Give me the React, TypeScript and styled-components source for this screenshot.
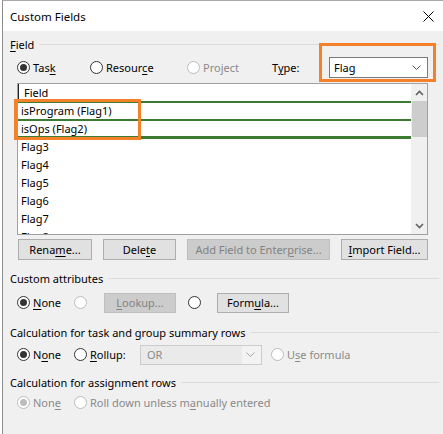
import React from "react";
import styled, { createGlobalStyle } from "styled-components";

const GlobalStyle = createGlobalStyle`
  html, body { margin: 0; padding: 0; background: #ffffff; }
  body {
    font-family: "Noto Sans", "Segoe UI", sans-serif;
    font-size: 11px;
    color: #000000;
  }
  #root { width: 443px; height: 434px; }
`;

const Page = styled.div`
  display: flex;
  width: 443px;
  height: 434px;
  padding-left: 2px;
  box-sizing: border-box;
  background: #ffffff;
`;

const Dialog = styled.div`
  position: relative;
  flex: 1;
  display: flex;
  flex-direction: column;
  background: #f0f0f0;
  border-left: 1px solid #8c8c8c;
  border-top: 1px solid #a8a8a8;
  box-sizing: border-box;
`;

const TitleBar = styled.div`
  height: 30px;
  flex: none;
  display: flex;
  align-items: center;
  justify-content: space-between;
  padding: 0 9px 0 7px;
  background: #ffffff;
  font-size: 11.5px;
`;

const Body = styled.div`
  display: flex;
  flex-direction: column;
  padding: 6px 4px 0 7px;
`;

const SectionHeader = styled.div<{ $top: number }>`
  display: flex;
  align-items: center;
  gap: 5px;
  height: 14px;
  margin-top: ${(p) => p.$top}px;
  white-space: nowrap;
  &::after {
    content: "";
    flex: 1;
    height: 1px;
    background: #dcdcdc;
  }
`;

const Indent = styled.div<{ $top: number }>`
  display: flex;
  flex-direction: column;
  padding: 0 11px 0 7px;
  margin-top: ${(p) => p.$top}px;
`;

const Row = styled.div`
  display: flex;
  align-items: center;
  height: 21px;
`;

const Key = styled.span`
  text-decoration: underline;
  text-underline-offset: 2px;
`;

const Option = styled.label<{ $w?: number; $off?: boolean }>`
  display: flex;
  align-items: center;
  gap: 3px;
  flex: none;
  width: ${(p) => (p.$w ? `${p.$w}px` : "auto")};
  color: ${(p) => (p.$off ? "#8a8a8a" : "#000000")};
  white-space: nowrap;
`;

const Circle = styled.span<{ $on?: boolean; $off?: boolean }>`
  position: relative;
  width: 13px;
  height: 13px;
  flex: none;
  box-sizing: border-box;
  border-radius: 50%;
  border: 1px solid ${(p) => (p.$off ? "#bcbcbc" : "#333333")};
  background: #ffffff;
  &::after {
    content: "";
    display: ${(p) => (p.$on ? "block" : "none")};
    position: absolute;
    inset: 2px;
    border-radius: 50%;
    background: ${(p) => (p.$off ? "#bcbcbc" : "#333333")};
  }
`;

const Radio = ({
  w,
  on,
  off,
  children,
}: {
  w?: number;
  on?: boolean;
  off?: boolean;
  children?: React.ReactNode;
}) => (
  <Option $w={w} $off={off}>
    <Circle $on={on} $off={off} />
    {children && <span>{children}</span>}
  </Option>
);

const FieldLabel = styled.span<{ $w: number }>`
  width: ${(p) => p.$w}px;
  flex: none;
`;

const Combo = styled.div<{ $w?: number; $off?: boolean }>`
  display: flex;
  align-items: center;
  justify-content: space-between;
  box-sizing: border-box;
  height: ${(p) => (p.$off ? 20 : 21)}px;
  width: ${(p) => (p.$w ? `${p.$w}px` : "auto")};
  flex: ${(p) => (p.$w ? "none" : "1")};
  padding: 0 6px 0 ${(p) => (p.$off ? 6 : 4)}px;
  border: 1px solid ${(p) => (p.$off ? "#cccccc" : "#7a7a7a")};
  background: ${(p) =>
    p.$off ? "linear-gradient(to right, #eaeaea 84%, #f3f3f3 84%)" : "#ffffff"};
  color: ${(p) => (p.$off ? "#8a8a8a" : "#000000")};
`;

const Chevron = ({ color }: { color: string }) => (
  <svg width="9" height="5" viewBox="0 0 9 5">
    <polyline points="0.5,0.5 4.5,4.5 8.5,0.5" fill="none" stroke={color} strokeWidth="1" />
  </svg>
);

const ListBox = styled.div`
  display: flex;
  height: 152px;
  box-sizing: border-box;
  border: 1px solid #a0a0a0;
  background: #ffffff;
`;

const Grid = styled.div`
  flex: 1;
  display: flex;
  flex-direction: column;
  overflow: hidden;
`;

const HeaderCell = styled.div`
  height: 17px;
  flex: none;
  display: flex;
  align-items: center;
  padding-left: 5px;
  border-left: 1px solid #222222;
`;

const Cell = styled.div<{ $top?: boolean; $bottom?: boolean }>`
  height: 18px;
  flex: none;
  display: flex;
  align-items: center;
  padding-left: 3px;
  box-shadow: ${(p) =>
    [p.$top && "inset 0 2px 0 #3b7b32", p.$bottom && "inset 0 -1px 0 #3b7b32"]
      .filter(Boolean)
      .join(", ") || "none"};
`;

const ScrollBar = styled.div`
  width: 16px;
  flex: none;
  display: flex;
  flex-direction: column;
  align-items: center;
  background: #f0f0f0;
`;

const ArrowBox = styled.div`
  height: 17px;
  width: 100%;
  display: flex;
  align-items: center;
  justify-content: center;
`;

const Thumb = styled.div`
  width: 15px;
  height: 36px;
  background: #cdcdcd;
`;

const Spacer = styled.div`
  flex: 1;
`;

const Arrow = ({ up }: { up?: boolean }) => (
  <svg width="9" height="6" viewBox="0 0 9 6">
    <polyline
      points={up ? "1,5 4.5,1.5 8,5" : "1,1 4.5,4.5 8,1"}
      fill="none"
      stroke="#606060"
      strokeWidth="1.6"
    />
  </svg>
);

const Button = styled.button<{ $w: number; $h?: number }>`
  width: ${(p) => p.$w}px;
  height: ${(p) => p.$h ?? 21}px;
  flex: none;
  box-sizing: border-box;
  padding: 0;
  font-family: inherit;
  font-size: 11px;
  color: #000000;
  background: #e1e1e1;
  border: 1px solid #adadad;
  &:disabled {
    color: #838383;
    background: #cccccc;
    border-color: #bfbfbf;
  }
`;

const ButtonRow = styled.div`
  display: flex;
  gap: 11px;
  padding-left: 1px;
  margin-top: 4px;
`;

const Gap = styled.span<{ $w: number }>`
  width: ${(p) => p.$w}px;
  flex: none;
`;

const Callout = styled.div<{ $x: number; $y: number; $w: number; $h: number }>`
  position: absolute;
  left: ${(p) => p.$x}px;
  top: ${(p) => p.$y}px;
  width: ${(p) => p.$w}px;
  height: ${(p) => p.$h}px;
  box-sizing: border-box;
  border: 3px solid #f5802a;
  pointer-events: none;
`;

const fields = ["Flag3", "Flag4", "Flag5", "Flag6", "Flag7", "Flag8"];

export default function App() {
  return (
    <>
      <GlobalStyle />
      <Page>
        <Dialog>
          <TitleBar>
            <span>Custom Fields</span>
            <svg width="11" height="11" viewBox="0 0 11 11">
              <path d="M0.5 0.5 L10.5 10.5 M10.5 0.5 L0.5 10.5" stroke="#000" strokeWidth="1" />
            </svg>
          </TitleBar>
          <Body>
            <SectionHeader $top={0}>
              <span>
                <Key>F</Key>ield
              </span>
            </SectionHeader>
            <Indent $top={6}>
              <Row>
                <Radio w={73} on>
                  Tas<Key>k</Key>
                </Radio>
                <Radio w={97}>
                  Resour<Key>c</Key>e
                </Radio>
                <Radio w={85} off>
                  Project
                </Radio>
                <FieldLabel $w={57}>
                  T<Key>y</Key>pe:
                </FieldLabel>
                <Combo>
                  <span>Flag</span>
                  <Chevron color="#555555" />
                </Combo>
              </Row>
            </Indent>
            <Indent $top={5}>
              <ListBox>
                <Grid>
                  <HeaderCell>Field</HeaderCell>
                  <Cell $top>isProgram (Flag1)</Cell>
                  <Cell $top $bottom>
                    isOps (Flag2)
                  </Cell>
                  {fields.map((f) => (
                    <Cell key={f} $top={f === "Flag3"}>
                      {f}
                    </Cell>
                  ))}
                </Grid>
                <ScrollBar>
                  <ArrowBox>
                    <Arrow up />
                  </ArrowBox>
                  <Thumb />
                  <Spacer />
                  <ArrowBox>
                    <Arrow />
                  </ArrowBox>
                </ScrollBar>
              </ListBox>
              <ButtonRow>
                <Button $w={74}>
                  Rena<Key>m</Key>e...
                </Button>
                <Button $w={73}>
                  Dele<Key>t</Key>e
                </Button>
                <Button $w={143} disabled>
                  Add Field to Enter<Key>p</Key>rise...
                </Button>
                <Button $w={87}>
                  <Key>I</Key>mport Field...
                </Button>
              </ButtonRow>
            </Indent>

            <SectionHeader $top={11}>
              <span>Custom attributes</span>
            </SectionHeader>
            <Indent $top={7}>
              <Row>
                <Radio w={57} on>
                  <Key>N</Key>one
                </Radio>
                <Radio w={30} off />
                <Button $w={72} $h={20} disabled>
                  <Key>L</Key>ookup...
                </Button>
                <Gap $w={12} />
                <Radio w={29} />
                <Button $w={72} $h={20}>
                  Form<Key>u</Key>la...
                </Button>
              </Row>
            </Indent>

            <SectionHeader $top={12}>
              <span>Calculation for task and group summary rows</span>
            </SectionHeader>
            <Indent $top={5}>
              <Row>
                <Radio w={57} on>
                  N<Key>o</Key>ne
                </Radio>
                <Radio w={66}>
                  <Key>R</Key>ollup:
                </Radio>
                <Combo $w={122} $off>
                  <span>OR</span>
                  <Chevron color="#a6a6a6" />
                </Combo>
                <Gap $w={9} />
                <Radio off>
                  U<Key>s</Key>e formula
                </Radio>
              </Row>
            </Indent>

            <SectionHeader $top={10}>
              <span>Calculation for assignment rows</span>
            </SectionHeader>
            <Indent $top={3}>
              <Row>
                <Radio w={57} on off>
                  Non<Key>e</Key>
                </Radio>
                <Radio off>
                  Roll down unless m<Key>a</Key>nually entered
                </Radio>
              </Row>
            </Indent>
          </Body>
          <Callout $x={316} $y={42} $w={117} $h={39} />
          <Callout $x={11} $y={98} $w={127} $h={41} />
        </Dialog>
      </Page>
    </>
  );
}
